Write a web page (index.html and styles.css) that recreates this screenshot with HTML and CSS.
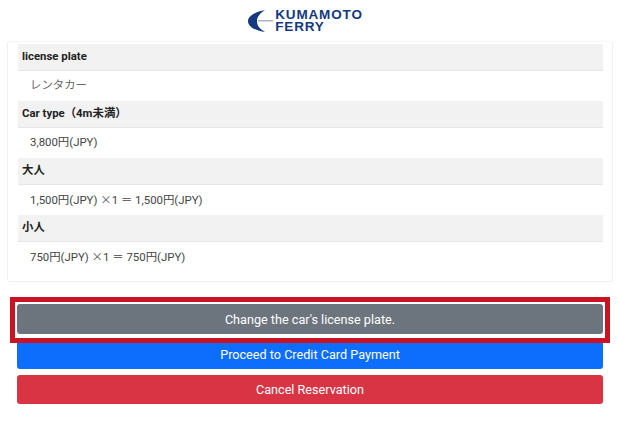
FILE: index.html
```html
<!DOCTYPE html>
<html lang="ja">
  <head>
    <meta charset="UTF-8" />
    <meta name="viewport" content="width=device-width, initial-scale=1.0" />
    <title>Kumamoto Ferry</title>
    <link rel="stylesheet" href="styles.css">
  </head>
  <body>
    <header class="site-header">
      <div class="logo">
        <svg class="logo-mark" width="26" height="24" viewBox="0 0 26 24">
          <path d="M17 1 C7 3 0 7 0 12 C0 18 8 22 17 23 C12 20 9 17 9 12 C9 8 12 4 17 1 Z" fill="#14397f" />
          <rect x="10" y="11" width="15" height="1.5" fill="#aab3c9" />
        </svg>
        <div class="logo-text">
          <span>KUMAMOTO</span>
          <span>FERRY</span>
        </div>
      </div>
    </header>

    <section class="detail-card">
      <div class="detail-title">license plate</div>
      <div class="detail-value detail-value-kana">レンタカー</div>
      <div class="detail-title">Car type（4m未満）</div>
      <div class="detail-value">3,800円(JPY)</div>
      <div class="detail-title">大人</div>
      <div class="detail-value">1,500円(JPY) <span class="times">×</span>1 ＝ 1,500円(JPY)</div>
      <div class="detail-title">小人</div>
      <div class="detail-value">750円(JPY) <span class="times">×</span>1 ＝ 750円(JPY)</div>
    </section>

    <div class="actions">
      <div class="highlight"></div>
      <button class="btn btn-gray">Change the car's license plate.</button>
      <button class="btn btn-blue">Proceed to Credit Card Payment</button>
      <button class="btn btn-red">Cancel Reservation</button>
    </div>
  </body>
</html>
```

FILE: styles.css
```css
* {
  margin: 0;
  padding: 0;
  box-sizing: border-box;
}

body {
  background: #fff;
  font-family: Roboto, "Noto Sans CJK JP", sans-serif;
  font-size: 11.4px;
  color: #333;
}

.site-header {
  height: 41px;
  display: flex;
  justify-content: center;
  align-items: center;
  padding-right: 9px;
  padding-top: 1px;
  background: #fff;
}

.logo {
  display: flex;
  align-items: center;
  gap: 1px;
}

.logo-mark {
  display: block;
}

.logo-text {
  display: flex;
  flex-direction: column;
  font-family: "Liberation Sans", sans-serif;
  font-size: 13.5px;
  font-weight: 700;
  line-height: 12.5px;
  letter-spacing: 0.85px;
  color: #14397f;
}

.detail-card {
  margin: 0 7px;
  height: 241px;
  padding: 2px 9px 0 10px;
  border: 1px solid #f0f0f0;
  border-top-color: #f6f6f6;
  border-radius: 3px;
}

.detail-title {
  height: 27px;
  padding-left: 4px;
  line-height: 24px;
  font-weight: 700;
  color: #222;
  background: #f2f2f3;
  border-bottom: 1px solid #e6e6e6;
}

.detail-value {
  height: 30px;
  padding-left: 12px;
  line-height: 29px;
  color: #444;
}

.detail-value-kana {
  color: #666;
}

.times {
  font-family: "Noto Sans CJK JP", sans-serif;
  color: #555;
}

.actions {
  position: relative;
  display: flex;
  flex-direction: column;
  gap: 6px;
  padding: 22px 17px 0;
}

.btn {
  display: block;
  width: 100%;
  height: 29px;
  border: none;
  border-radius: 3px;
  font-family: Roboto, sans-serif;
  font-size: 12.65px;
  color: #fff;
}

.btn-gray {
  height: 30px;
  background: #6c757d;
}

.btn-blue {
  background: #0d6efd;
}

.btn-red {
  background: #d93444;
}

/* red frame drawn over the first button */
.highlight {
  position: absolute;
  left: 10px;
  top: 15px;
  width: 600px;
  height: 46px;
  border: 5px solid #cb1423;
  box-shadow: inset 0 0 0 2px #fff;
}
```
